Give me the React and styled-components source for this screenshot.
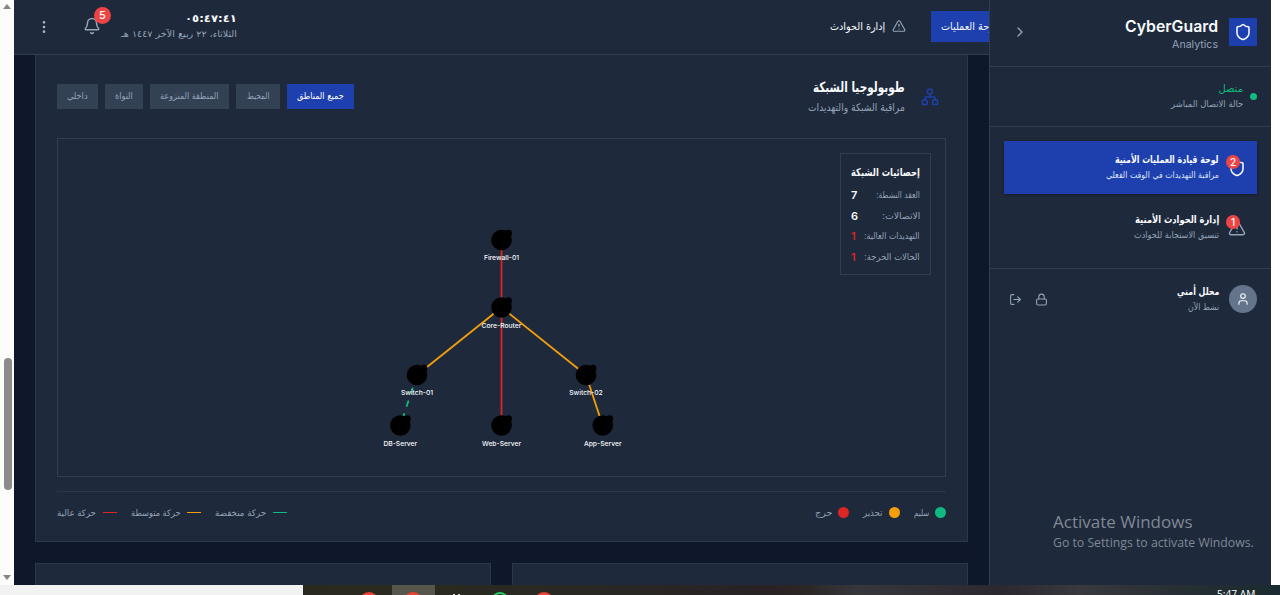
import React, { useLayoutEffect, useRef, useState } from "react";
import styled, { createGlobalStyle } from "styled-components";
import { Shield, TriangleAlert, ChevronRight, Bell, EllipsisVertical, Lock, LogOut, User } from "lucide-react";

const c = {
  bg: "#0f172a", panel: "#1e293b", line: "#303e51", tab: "#334155", soft: "#2a384b", blue: "#1e40af",
  red: "#dc2626", badge: "#ef4444", amber: "#f59e0b", green: "#10b981",
  text: "#f8fafc", muted: "#94a3b8",
};

const Global = createGlobalStyle`
  * { box-sizing: border-box; }
  body { margin: 0; background: #fff; overflow: hidden; font-family: Inter, "DejaVu Sans", sans-serif; }
`;

const Screen = styled.div`
  width: 1280px; height: 595px; display: flex; flex-direction: column; overflow: hidden;
`;
const Browser = styled.div`display: flex; height: 585px; background: #fff;`;
const ScrollTrack = styled.div`
  width: 14px; height: 585px; background: #fcfcfc; display: flex; flex-direction: column;
  align-items: center; justify-content: space-between; padding: 4px 0 5px;
`;
const Arrow = styled.div`
  border-left: 4.5px solid transparent; border-right: 4.5px solid transparent;
  ${p => (p.$up ? "border-bottom: 5px solid #858585;" : "border-top: 5px solid #858585;")}
`;
const Thumb = styled.div`width: 8px; height: 132px; margin: 261px 0 0 1px; background: #8b8b8b; border-radius: 4px;`;
const ThumbSpace = styled.div`flex: 1; margin-top: 88px;`;
const AppFrame = styled.div`width: 1257px; display: flex; background: ${c.bg};`;

const Label = styled.span`
  display: block; flex: none; width: ${p => p.$w}px; height: ${p => p.$h}px; line-height: ${p => p.$h}px;
  font-family: ${p => (p.$latin ? "Inter" : '"DejaVu Sans"')}, sans-serif;
  font-size: ${p => p.$size}px; font-weight: ${p => p.$weight || 400}; color: ${p => p.$color || c.muted};
  white-space: nowrap;
`;
const Ink = styled.span`display: inline-block; transform-origin: right center;`;

function T({ w, h = 14, size, weight, color, latin, children }) {
  const ref = useRef(null);
  const [scale, setScale] = useState(1);
  useLayoutEffect(() => {
    const measure = () => ref.current && setScale(w / ref.current.offsetWidth);
    measure();
    document.fonts?.ready.then(measure);
  }, [w, size, children]);
  return (
    <Label $w={w} $h={h} $size={size} $weight={weight} $color={color} $latin={latin}>
      <Ink ref={ref} style={{ transform: `scaleX(${scale})` }}>{children}</Ink>
    </Label>
  );
}

const Sidebar = styled.aside`width: 282px; height: 585px; background: ${c.panel}; border-left: 1px solid ${c.line}; flex: none;`;
const Brand = styled.div`
  height: 67px; border-bottom: 1px solid ${c.line}; display: flex; align-items: center; padding: 0 14px 2px 22px; gap: 11px;
`;
const Logo = styled.div`width: 28px; height: 28px; background: ${c.blue}; display: grid; place-items: center;`;
const Stack = styled.div`display: flex; flex-direction: column; align-items: flex-start;`;
const BrandText = styled(Stack)`padding-top: 5px;`;
const Push = styled.div`flex: 1;`;
const Status = styled.div`
  height: 60px; border-bottom: 1px solid ${c.line}; display: flex; align-items: center; padding: 0 14px; gap: 7px;
`;
const Dot = styled.i`width: ${p => p.$s}px; height: ${p => p.$s}px; border-radius: 50%; background: ${p => p.$c}; flex: none;`;
const Nav = styled.nav`height: 142px; padding: 14px; border-bottom: 1px solid ${c.line}; display: flex; flex-direction: column; gap: 7px;`;
const NavItem = styled.div`
  height: 53px; display: flex; align-items: center; padding: 0 11px; gap: 9px;
  background: ${p => (p.$active ? c.blue : "transparent")};
  box-shadow: ${p => (p.$active ? "0 1px 3px rgba(0,0,0,.35)" : "none")};
`;
const IconSlot = styled.div`position: relative; width: 18px; height: 18px; display: grid; place-items: center; color: ${p => p.$c || c.muted};`;
const Badge = styled.b`
  position: absolute; width: ${p => p.$s}px; height: ${p => p.$s}px; top: ${p => p.$t}px; left: ${p => p.$l}px;
  border-radius: 50%; background: ${c.badge}; color: #fff; font: 500 ${p => p.$f}px/${p => p.$s}px Inter, sans-serif; text-align: center;
`;
const UserBar = styled.div`height: 60px; display: flex; align-items: center; padding: 0 14px 0 19px; gap: 10px; color: ${c.muted};`;
const Avatar = styled.div`width: 28px; height: 28px; border-radius: 50%; background: #64748b; color: #f1f5f9; display: grid; place-items: center;`;
const UserActions = styled.div`display: flex; align-items: center; gap: 13px;`;
const Watermark = styled.div`
  position: absolute; left: 1053px; top: 509px; direction: ltr; color: #808895; font-family: "Open Sans", sans-serif; white-space: nowrap;
`;
const WaterTitle = styled.div`font-size: 17px; line-height: 25px;`;
const WaterSub = styled.div`font-size: 12.25px; line-height: 18px;`;

const Main = styled.main`width: 975px; height: 585px; overflow: hidden;`;
const Topbar = styled.header`
  height: 55px; background: ${c.panel}; border-bottom: 1px solid ${c.line}; display: flex; align-items: center; padding: 0 0 1px 24px;
`;
const TopTab = styled.div`
  width: 58px; height: 31px; background: ${c.blue}; overflow: hidden; display: flex; align-items: center; justify-content: flex-end; padding: 0 0 2px 10px;
`;
const TopLink = styled.div`display: flex; align-items: center; gap: 7px; margin-right: 25px; padding-bottom: 1px; color: ${c.muted};`;
const BellSlot = styled.div`position: relative; width: 18px; height: 18px; margin: 0 20px 1px 37px; color: ${c.muted};`;
const MenuSlot = styled.div`width: 14px; height: 16px; margin-right: -6px; display: grid; place-items: center; color: #a9b5c5;`;
const Content = styled.div`padding: 0 21px; display: flex; flex-direction: column; gap: 21px;`;
const Card = styled.section`
  height: 487px; background: ${c.panel}; border: 1px solid ${c.soft}; border-top: 0; padding: 22px 21px 0; overflow: hidden;
`;
const CardHead = styled.div`height: 61px; display: flex; align-items: flex-start;`;
const HeadIcon = styled.div`width: 18px; height: 18px; margin: 11px 7px 0 16px; color: ${c.blue};`;
const Tabs = styled.div`display: flex; gap: 7px; padding-top: 7px;`;
const Tab = styled.div`
  width: ${p => p.$w}px; height: 25px; padding-bottom: 2px; display: flex; align-items: center; justify-content: center;
  background: ${p => (p.$active ? c.blue : c.tab)};
`;
const Canvas = styled.div`position: relative; height: 339px; border: 1px solid ${c.line};`;
const Graph = styled.svg`display: block; width: 887px; height: 337px;`;
const Stats = styled.div`
  position: absolute; right: 14px; top: 14px; width: 91px; height: 122px; border: 1px solid ${c.line};
  padding: 11px 10px; background: ${c.panel};
`;
const StatRows = styled.div`padding-top: 4px;`;
const StatRow = styled.div`display: flex; justify-content: space-between; align-items: center; height: 20.5px;`;
const Value = styled.span`
  width: 8px; text-align: left; direction: ltr; font: 600 11px/14px Inter, sans-serif; color: ${p => p.$c};
`;
const Legend = styled.div`
  margin-top: 14px; border-top: 1px solid ${c.soft}; height: 42px; display: flex; align-items: center; justify-content: space-between;
`;
const LegendGroup = styled.div`display: flex; gap: 14px;`;
const LegendItem = styled.div`display: flex; align-items: center; gap: ${p => p.$gap}px;`;
const Dash = styled.i`width: 14px; height: 1.5px; background: ${p => p.$c};`;
const NextCards = styled.div`display: flex; gap: 21px;`;
const NextCard = styled.div`width: 456px; height: 30px; background: ${c.panel}; border: 1px solid ${c.soft};`;

const Taskbar = styled.div`
  height: 10px; display: flex; overflow: hidden; position: relative;
  background: linear-gradient(90deg, #29281e 0, #2b2a20 420px, #292823 590px, #282225 760px, #2b2524 800px, #37373b 860px, #2b282f 1000px, #39393e 1080px, #252e33 1190px, #1b2b31 1280px);
`;
const SearchBox = styled.div`width: 303px; height: 10px; background: #f2f2f2;`;
const ActiveTask = styled.div`width: 43px; height: 10px; margin-left: 89px; background: #57564d;`;
const TaskIcons = styled.svg`position: absolute; left: 350px; top: 0; width: 220px; height: 10px;`;
const Clock = styled.span`position: absolute; left: 1217px; top: 2px; font: 10.2px/14px "Open Sans", sans-serif; color: #fff; white-space: nowrap;`;

const nodes = [
  ["Firewall-01", 443.5, 101], ["Core-Router", 443.5, 168.5], ["Switch-01", 359, 236], ["Switch-02", 528, 236],
  ["DB-Server", 342.3, 286.5], ["Web-Server", 443.5, 286.5], ["App-Server", 544.7, 286.5],
];
const links = [[0, 1, c.red], [1, 2, c.amber], [1, 3, c.amber], [1, 5, c.red], [2, 4, c.green, "6.7 6.7"], [3, 6, c.amber]];
const stats = [
  ["العقد النشطة:", 44, "7", c.text], ["الاتصالات:", 38, "6", c.text],
  ["التهديدات العالية:", 56, "1", c.red], ["الحالات الحرجة:", 56, "1", c.red],
];
const tabs = [["جميع المناطق", 67, 47], ["المحيط", 44, 23], ["المنطقة المنزوعة", 79, 58], ["النواة", 38, 18], ["داخلي", 41, 21]];

function TopologyIcon() {
  return (
    <svg width="18" height="18" viewBox="0 0 18 18" fill="none" stroke="currentColor" strokeWidth="1.5">
      <rect x="6.5" y="1.2" width="4.8" height="4.8" rx="1.4" />
      <rect x="1.4" y="12" width="4.8" height="4.6" rx="0.9" />
      <rect x="11.7" y="12" width="4.8" height="4.6" rx="0.9" />
      <path d="M8.9 6v3M3.8 12v-1.8Q3.8 9 5 9h7.9q1.2 0 1.2 1.2V12" />
    </svg>
  );
}

function SidePanel() {
  return (
    <Sidebar>
      <Brand>
        <Logo><Shield size={18} color="#fff" /></Logo>
        <BrandText>
          <T latin w={93} h={19} size={16} weight={600} color={c.text}>CyberGuard</T>
          <T latin w={46} h={17} size={10.6}>Analytics</T>
        </BrandText>
        <Push />
        <ChevronRight size={16} color={c.muted} />
      </Brand>
      <Status>
        <Dot $s={7} $c={c.green} />
        <Stack>
          <T w={25} h={15} size={10} color={c.green}>متصل</T>
          <T w={72} h={16} size={9}>حالة الاتصال المباشر</T>
        </Stack>
      </Status>
      <Nav>
        <NavItem $active>
          <IconSlot $c="#fff"><Shield size={18} /><Badge $s={14} $t={-4} $l={-2} $f={10}>2</Badge></IconSlot>
          <Stack>
            <T w={104} h={15} size={10.5} weight={700} color={c.text}>لوحة قيادة العمليات الأمنية</T>
            <T w={113} h={16} size={9} color="#dbe3fa">مراقبة التهديدات في الوقت الفعلي</T>
          </Stack>
        </NavItem>
        <NavItem>
          <IconSlot><TriangleAlert size={18} /><Badge $s={14} $t={-4} $l={-2} $f={10}>1</Badge></IconSlot>
          <Stack>
            <T w={84} h={15} size={10.5} weight={700} color={c.text}>إدارة الحوادث الأمنية</T>
            <T w={85} h={16} size={9}>تنسيق الاستجابة للحوادث</T>
          </Stack>
        </NavItem>
      </Nav>
      <UserBar>
        <Avatar><User size={14} /></Avatar>
        <Stack>
          <T w={42} h={15} size={10.5} weight={700} color={c.text}>محلل أمني</T>
          <T w={31} h={16} size={9}>نشط الآن</T>
        </Stack>
        <Push />
        <UserActions><Lock size={13} /><LogOut size={13} /></UserActions>
      </UserBar>
      <Watermark>
        <WaterTitle>Activate Windows</WaterTitle>
        <WaterSub>Go to Settings to activate Windows.</WaterSub>
      </Watermark>
    </Sidebar>
  );
}

export default function App() {
  return (
    <Screen>
      <Global />
      <Browser>
        <ScrollTrack><Arrow $up /><ThumbSpace><Thumb /></ThumbSpace><Arrow /></ScrollTrack>
        <AppFrame dir="rtl">
          <SidePanel />
          <Main>
            <Topbar>
              <TopTab><T w={56} size={10.5} weight={500} color={c.text}>لوحة العمليات</T></TopTab>
              <TopLink><TriangleAlert size={14} /><T w={55} size={10.5} weight={500} color={c.text}>إدارة الحوادث</T></TopLink>
              <Push />
              <Stack>
                <T w={52} h={15} size={10.5} weight={700} color={c.text}>٠٥:٤٧:٤١</T>
                <T w={116} h={16} size={9}>الثلاثاء، ٢٢ ربيع الآخر ١٤٤٧ هـ</T>
              </Stack>
              <BellSlot><Bell size={18} /><Badge $s={17} $t={-10} $l={11} $f={11}>5</Badge></BellSlot>
              <MenuSlot><EllipsisVertical size={16} /></MenuSlot>
            </Topbar>
            <Content>
              <Card>
                <CardHead>
                  <HeadIcon><TopologyIcon /></HeadIcon>
                  <Stack>
                    <T w={92} h={20} size={14} weight={700} color={c.text}>طوبولوجيا الشبكة</T>
                    <T w={97} h={21} size={10.5}>مراقبة الشبكة والتهديدات</T>
                  </Stack>
                  <Push />
                  <Tabs>
                    {tabs.map(([t, w, tw], i) => (
                      <Tab key={t} $w={w} $active={!i}><T w={tw} size={9} color={i ? c.muted : "#fff"}>{t}</T></Tab>
                    ))}
                  </Tabs>
                </CardHead>
                <Canvas>
                  <Graph viewBox="0 0 887 337" direction="ltr">
                    {links.map(([a, b, col, dash]) => (
                      <line key={`${a}-${b}`} x1={nodes[a][1]} y1={nodes[a][2]} x2={nodes[b][1]} y2={nodes[b][2]} stroke={col} strokeWidth="1.8" strokeDasharray={dash} />
                    ))}
                    {nodes.map(([name, x, y]) => (
                      <g key={name}>
                        <circle cx={x} cy={y} r="10.3" />
                        <circle cx={x + 7} cy={y - 6.8} r="3.5" />
                        <text x={x} y={y + 20} textAnchor="middle" fontFamily="Inter" fontSize="6.75" fontWeight="500" fill="#f8fafc">{name}</text>
                      </g>
                    ))}
                  </Graph>
                  <Stats>
                    <T w={69} h={16} size={11} weight={700} color={c.text}>إحصائيات الشبكة</T>
                    <StatRows>
                      {stats.map(([t, w, v, col]) => (
                        <StatRow key={t}><T w={w} size={9}>{t}</T><Value $c={col}>{v}</Value></StatRow>
                      ))}
                    </StatRows>
                  </Stats>
                </Canvas>
                <Legend>
                  <LegendGroup>
                    {[["سليم", 15, c.green], ["تحذير", 20, c.amber], ["حرج", 17, c.red]].map(([t, w, col]) => (
                      <LegendItem key={t} $gap={6}><Dot $s={11} $c={col} /><T w={w} size={9}>{t}</T></LegendItem>
                    ))}
                  </LegendGroup>
                  <LegendGroup>
                    {[["حركة منخفضة", 51, c.green], ["حركة متوسطة", 49, c.amber], ["حركة عالية", 39, c.red]].map(([t, w, col]) => (
                      <LegendItem key={t} $gap={7}><Dash $c={col} /><T w={w} size={9}>{t}</T></LegendItem>
                    ))}
                  </LegendGroup>
                </Legend>
              </Card>
              <NextCards><NextCard /><NextCard /></NextCards>
            </Content>
          </Main>
        </AppFrame>
      </Browser>
      <Taskbar>
        <SearchBox /><ActiveTask />
        <TaskIcons>
          <circle cx="19" cy="16.5" r="9.5" fill="#ea4335" />
          <circle cx="63" cy="16.5" r="9.5" fill="#ea4335" />
          <path d="M104 9v2M109 9v2" stroke="#ddd" strokeWidth="2" />
          <circle cx="150" cy="16" r="8" fill="none" stroke="#25d366" strokeWidth="2" />
          <circle cx="194" cy="16.5" r="9.5" fill="#ea4335" />
        </TaskIcons>
        <Clock>5:47 AM</Clock>
      </Taskbar>
    </Screen>
  );
}
